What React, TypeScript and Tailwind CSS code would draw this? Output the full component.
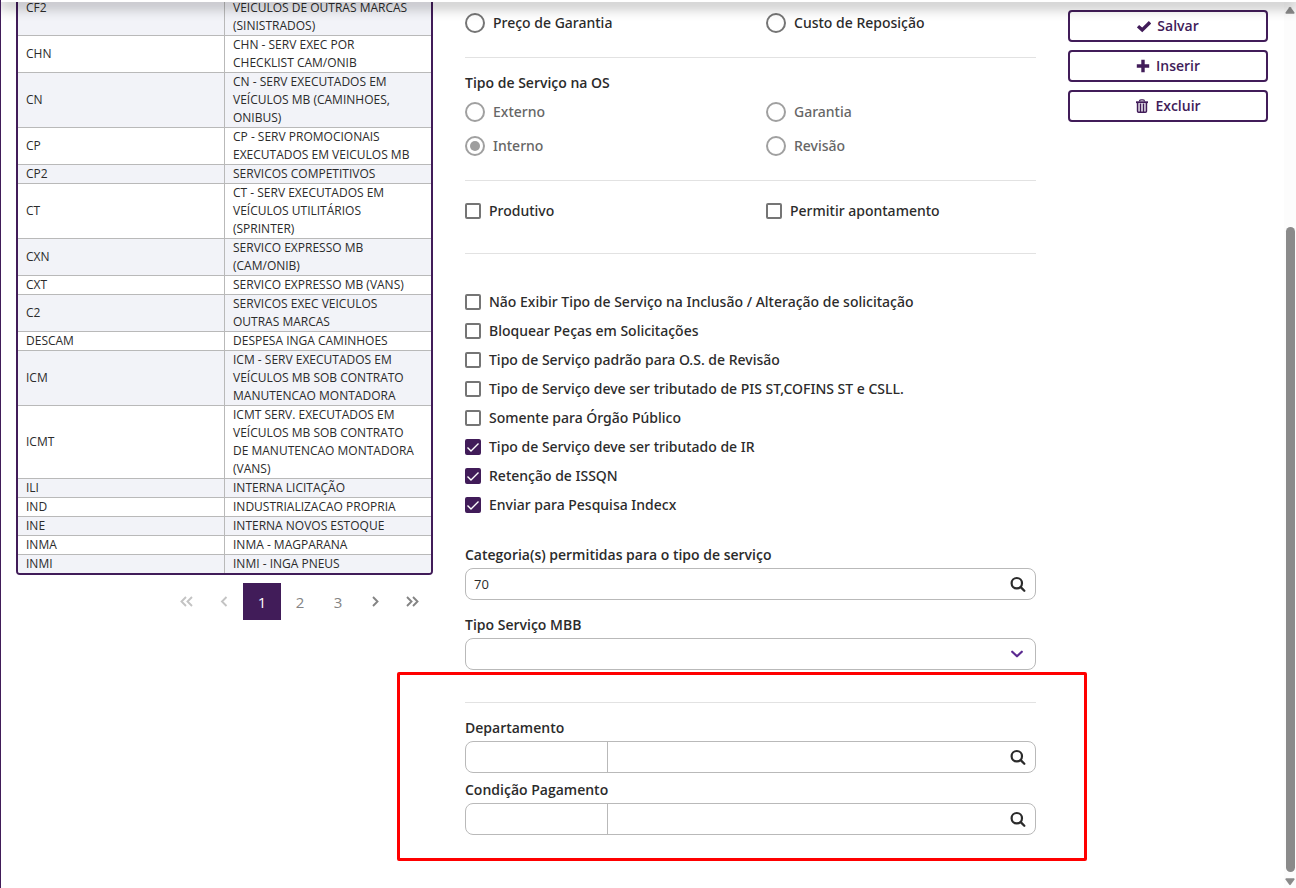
import { ReactNode } from "react";

type ServiceRow = { code: string; lines: string[] };

const rows: ServiceRow[] = [
  { code: "CHN", lines: ["CHN - SERV EXEC POR", "CHECKLIST CAM/ONIB"] },
  { code: "CN", lines: ["CN - SERV EXECUTADOS EM", "VEÍCULOS MB (CAMINHOES,", "ONIBUS)"] },
  { code: "CP", lines: ["CP - SERV PROMOCIONAIS", "EXECUTADOS EM VEICULOS MB"] },
  { code: "CP2", lines: ["SERVICOS COMPETITIVOS"] },
  { code: "CT", lines: ["CT - SERV EXECUTADOS EM", "VEÍCULOS UTILITÁRIOS", "(SPRINTER)"] },
  { code: "CXN", lines: ["SERVICO EXPRESSO MB", "(CAM/ONIB)"] },
  { code: "CXT", lines: ["SERVICO EXPRESSO MB (VANS)"] },
  { code: "C2", lines: ["SERVICOS EXEC VEICULOS", "OUTRAS MARCAS"] },
  { code: "DESCAM", lines: ["DESPESA INGA CAMINHOES"] },
  { code: "ICM", lines: ["ICM - SERV EXECUTADOS EM", "VEÍCULOS MB SOB CONTRATO", "MANUTENCAO MONTADORA"] },
  {
    code: "ICMT",
    lines: ["ICMT SERV. EXECUTADOS EM", "VEÍCULOS MB SOB CONTRATO", "DE MANUTENCAO MONTADORA", "(VANS)"],
  },
  { code: "ILI", lines: ["INTERNA LICITAÇÃO"] },
  { code: "IND", lines: ["INDUSTRIALIZACAO PROPRIA"] },
  { code: "INE", lines: ["INTERNA NOVOS ESTOQUE"] },
  { code: "INMA", lines: ["INMA - MAGPARANA"] },
  { code: "INMI", lines: ["INMI - INGA PNEUS"] },
];

const options = [
  { label: "Não Exibir Tipo de Serviço na Inclusão / Alteração de solicitação", on: false },
  { label: "Bloquear Peças em Solicitações", on: false },
  { label: "Tipo de Serviço padrão para O.S. de Revisão", on: false },
  { label: "Tipo de Serviço deve ser tributado de PIS ST,COFINS ST e CSLL.", on: false },
  { label: "Somente para Órgão Público", on: false },
  { label: "Tipo de Serviço deve ser tributado de IR", on: true },
  { label: "Retenção de ISSQN", on: true },
  { label: "Enviar para Pesquisa Indecx", on: true },
];

function ServiceTable() {
  return (
    <div className="-mt-[21px] overflow-hidden rounded-b-sm border-2 border-[#411c59]">
      <table className="w-full table-fixed border-collapse font-['Open_Sans',sans-serif] text-xs leading-[18px] text-[#2b2b2b]">
        <tbody>
          <tr className="border-b border-[#b9b9b9] bg-[#f2f3f8]">
            <td className="border-r border-[#b9b9b9] px-2 py-0">CF2</td>
            <td className="px-2 pt-[18px] pb-0 whitespace-nowrap">
              VEICULOS DE OUTRAS MARCAS
              <br />
              (SINISTRADOS)
            </td>
          </tr>
          {rows.map((row) => (
            <tr key={row.code} className="border-b border-[#b9b9b9] last:border-b-0 even:bg-white odd:bg-[#f2f3f8]">
              <td className="border-r border-[#b9b9b9] px-2 py-0">{row.code}</td>
              <td className="px-2 py-0 whitespace-pre">{row.lines.join("\n")}</td>
            </tr>
          ))}
        </tbody>
      </table>
    </div>
  );
}

function Chevrons({ d, label, muted }: { d: string; label: string; muted?: boolean }) {
  return (
    <button
      type="button"
      aria-label={label}
      disabled={muted}
      className={`flex h-[37px] w-[38px] items-center justify-center ${muted ? "text-[#c3c3c3]" : "text-[#848484]"}`}
    >
      <svg width="16" height="16" viewBox="0 0 16 16" fill="none" stroke="currentColor" strokeWidth="1.9">
        <path d={d} />
      </svg>
    </button>
  );
}

function Pagination() {
  const page =
    "flex h-[37px] w-[38px] items-center justify-center font-['Open_Sans',sans-serif] text-[15px]";
  return (
    <nav aria-label="Paginação" className="mt-2 flex justify-end">
      <Chevrons muted label="Primeira" d="M8 3 3.500 7.500 8 12M14 3 9.500 7.500 14 12" />
      <Chevrons muted label="Anterior" d="M10.500 3 6 7.500l4.500 4.500" />
      <button type="button" className={`${page} bg-[#411c59] text-white`}>1</button>
      <button type="button" className={`${page} text-[#848484]`}>2</button>
      <button type="button" className={`${page} text-[#848484]`}>3</button>
      <Chevrons label="Próxima" d="m5 3 4.500 4.500L5 12" />
      <Chevrons label="Última" d="m1 3 4.500 4.500L1 12M7 3l4.500 4.500L7 12" />
    </nav>
  );
}

function Radio({ name, label, disabled, checked }: { name: string; label: string; disabled?: boolean; checked?: boolean }) {
  return (
    <label className={`flex h-5 items-center gap-2 ${disabled ? "text-[#666666]" : "text-[#2b2b2b]"}`}>
      <span className="grid size-5 place-items-center">
        <input
          type="radio"
          name={name}
          disabled={disabled}
          defaultChecked={checked}
          className="peer col-start-1 row-start-1 size-5 appearance-none rounded-full border-2 border-[#757575] disabled:border-[#a0a0a0]"
        />
        <span className="pointer-events-none col-start-1 row-start-1 hidden size-2.5 rounded-full bg-[#9e9e9e] peer-checked:block" />
      </span>
      {label}
    </label>
  );
}

function Checkbox({ label, checked }: { label: string; checked?: boolean }) {
  return (
    <label className="flex h-5 items-center gap-2 text-[#2b2b2b]">
      <span className="grid size-4 shrink-0 place-items-center">
        <input
          type="checkbox"
          defaultChecked={checked}
          className="peer col-start-1 row-start-1 size-4 appearance-none rounded-xs border-2 border-[#757575] checked:border-[#411c59] checked:bg-[#411c59]"
        />
        <svg
          className="pointer-events-none col-start-1 row-start-1 hidden peer-checked:block"
          width="16"
          height="16"
          viewBox="0 0 16 16"
          fill="none"
          stroke="#fff"
          strokeWidth="1.4"
        >
          <path d="m2.500 8.500 3.500 3.500 7.500-7.500" />
        </svg>
      </span>
      {label}
    </label>
  );
}

function SearchButton({ label }: { label: string }) {
  return (
    <button type="button" aria-label={label} className="flex w-[34px] items-center justify-center text-[#2b2b2b]">
      <svg width="16" height="16" viewBox="0 0 16 16" fill="none" stroke="currentColor">
        <circle cx="6.800" cy="7.200" r="5.200" strokeWidth="2.200" />
        <path d="m10.700 11.100 3.600 3.600" strokeWidth="2.300" strokeLinecap="round" />
      </svg>
    </button>
  );
}

const fieldBox = "flex h-8 overflow-hidden rounded-lg border border-[#b9b9b9] bg-white";
const fieldLabel = "font-['Open_Sans',sans-serif] font-semibold text-[#2b2b2b]";
const bareInput =
  "min-w-0 bg-transparent px-2 font-['Open_Sans',sans-serif] text-[13px] font-normal text-[#2b2b2b] outline-none";

function LookupField({ id, label }: { id: string; label: string }) {
  return (
    <div className="flex flex-col gap-[3px]">
      <label htmlFor={id} className={fieldLabel}>{label}</label>
      <div className={fieldBox}>
        <input id={id} className={`${bareInput} w-1/4 border-r border-[#b9b9b9]`} />
        <input aria-label={`${label}: descrição`} className={`${bareInput} flex-1`} />
        <SearchButton label={`Pesquisar ${label}`} />
      </div>
    </div>
  );
}

function ActionButton({ icon, children }: { icon: ReactNode; children: ReactNode }) {
  return (
    <button
      type="button"
      className="flex h-8 items-center justify-center gap-1.5 rounded-sm border-2 border-[#411c59] bg-white font-['Open_Sans',sans-serif] font-semibold text-[#411c59]"
    >
      <svg width="14" height="14" viewBox="0 0 14 14" fill="none" stroke="currentColor">
        {icon}
      </svg>
      {children}
    </button>
  );
}

function ScrollRail() {
  return (
    <div aria-hidden="true" className="flex w-3 shrink-0 flex-col items-center bg-[#fcfcfc] pt-[6px] pb-0.5">
      <svg width="10" height="8" viewBox="0 0 10 8" fill="#8a8a8a">
        <path d="M4.300 1.200q.7-.8 1.400 0L9.500 6.500q.4 1-.6 1.300H1.100Q.1 7.500.5 6.500z" />
      </svg>
      <div className="h-[213px]" />
      <div className="w-[9px] flex-1 rounded-full bg-[#8a8a8a]" />
      <svg className="mt-1.5" width="10" height="8" viewBox="0 0 10 8" fill="#8a8a8a">
        <path d="M4.300 6.800q.7.8 1.400 0L9.500 1.500q.4-1-.6-1.300H1.100Q.1.500.5 1.500z" />
      </svg>
    </div>
  );
}

export default function App() {
  return (
    <div className="relative flex min-h-screen overflow-hidden border-l border-[#411c59] bg-white font-['Noto_Sans',sans-serif] text-sm leading-5 font-medium">
      <header className="absolute inset-x-0 top-0 z-10 h-0.5 bg-white shadow-[0_2px_14px_2px_rgba(0,0,0,0.45)]" />

      <main className="flex flex-1 gap-8 pr-4 pl-[15px]">
        <section className="w-[417px] shrink-0 font-normal">
          <ServiceTable />
          <Pagination />
        </section>

        <form className="flex min-w-0 flex-1 flex-col pt-[13px]">
          <div className="grid grid-cols-[301px_1fr]">
            <Radio name="preco" label="Preço de Garantia" />
            <Radio name="preco" label="Custo de Reposição" />
          </div>
          <hr className="mt-6 border-[#e2e2e2]" />

          <fieldset className="mt-[15px]">
            <legend className={fieldLabel}>Tipo de Serviço na OS</legend>
            <div className="mt-[9px] grid grid-cols-[301px_1fr] gap-y-3.5">
              <Radio name="tipo" label="Externo" disabled />
              <Radio name="tipo" label="Garantia" disabled />
              <Radio name="tipo" label="Interno" disabled checked />
              <Radio name="tipo" label="Revisão" disabled />
            </div>
          </fieldset>
          <hr className="mt-6 border-[#e2e2e2]" />

          <div className="mt-5 grid grid-cols-[301px_1fr]">
            <Checkbox label="Produtivo" />
            <Checkbox label="Permitir apontamento" />
          </div>
          <hr className="mt-8 border-[#e2e2e2]" />

          <div className="mt-[38px] flex flex-col gap-[9px]">
            {options.map((o) => (
              <Checkbox key={o.label} label={o.label} checked={o.on} />
            ))}
          </div>

          <div className="mt-[30px] flex flex-col gap-[3px]">
            <label htmlFor="categorias" className={fieldLabel}>
              Categoria(s) permitidas para o tipo de serviço
            </label>
            <div className={fieldBox}>
              <input id="categorias" defaultValue="70" className={`${bareInput} flex-1`} />
              <SearchButton label="Pesquisar categorias" />
            </div>
          </div>

          <div className="mt-[15px] flex flex-col gap-[3px]">
            <label htmlFor="tipo-mbb" className={fieldLabel}>Tipo Serviço MBB</label>
            <div className="grid">
              <select
                id="tipo-mbb"
                className="col-start-1 row-start-1 h-8 w-full appearance-none rounded-lg border border-[#b9b9b9] bg-white px-2"
              >
                <option value=""></option>
              </select>
              <svg
                className="pointer-events-none col-start-1 row-start-1 mr-[13px] self-center justify-self-end text-[#5b2a91]"
                width="12"
                height="12"
                viewBox="0 0 12 12"
                fill="none"
                stroke="currentColor"
                strokeWidth="2.200"
                strokeLinecap="round"
                strokeLinejoin="round"
              >
                <path d="m1.200 3.700 4.800 4.600 4.800-4.600" />
              </svg>
            </div>
          </div>

          <section className="relative mt-8">
            <div className="pointer-events-none absolute -top-[30px] -right-[51px] -bottom-[26px] -left-[68px] rounded-xs border-3 border-[#ff0000]" />
            <hr className="mb-[15px] border-[#e2e2e2]" />
            <div className="flex flex-col gap-[7px]">
              <LookupField id="departamento" label="Departamento" />
              <LookupField id="condicao" label="Condição Pagamento" />
            </div>
          </section>
        </form>

        <aside className="flex w-[200px] shrink-0 flex-col gap-2 pt-2.5">
          <ActionButton icon={<path d="m1 7.200 4.200 3.700 7.800-7.600" strokeWidth="3.400" />}>Salvar</ActionButton>
          <ActionButton icon={<path d="M7 .8v12.400M.8 7h12.400" strokeWidth="3.400" />}>Inserir</ActionButton>
          <ActionButton
            icon={
              <>
                <path d="M4.500 2.500Q4.500.8 6 .8h2q1.500 0 1.500 1.700" strokeWidth="1.200" />
                <path d="M1 3.200h12" strokeWidth="1.800" />
                <path d="M2.600 4v8.200q0 1 1 1h6.800q1 0 1-1V4M5.500 4.500v8M8.500 4.500v8" strokeWidth="1.600" />
              </>
            }
          >
            Excluir
          </ActionButton>
        </aside>
      </main>

      <ScrollRail />
    </div>
  );
}
